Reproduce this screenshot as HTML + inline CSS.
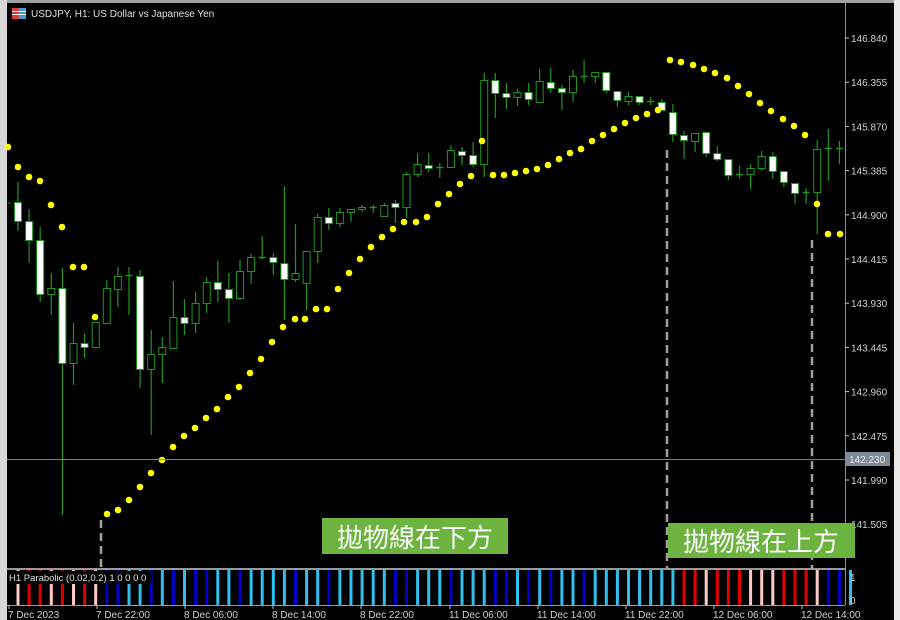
<!DOCTYPE html>
<html><head><meta charset="utf-8">
<style>
html,body{margin:0;padding:0;background:#000;width:900px;height:620px;overflow:hidden}
svg{display:block}
text{font-family:"Liberation Sans",sans-serif}
</style></head><body>
<svg id="s" width="900" height="620" xmlns="http://www.w3.org/2000/svg">
<rect x="0" y="0" width="900" height="620" fill="#000"/>
<rect x="0" y="0" width="900" height="3" fill="#a0a0a0"/>
<rect x="0" y="0" width="7" height="620" fill="#d8d8d8"/>
<rect x="894" y="0" width="6" height="620" fill="#e8e8e8"/>
<g id="g"></g>
<line x1="845.5" y1="3" x2="845.5" y2="605" stroke="#909090" stroke-width="1"/>
<line x1="7" y1="459.5" x2="845" y2="459.5" stroke="#808080" stroke-width="1"/>
<rect x="846" y="452" width="44" height="14" fill="#7d8b99"/>
<text x="849" y="463" font-size="10" fill="#e8e8e8">142.230</text>
<g font-size="10" fill="#d0d0d0" id="ax"></g>
<rect x="12" y="8" width="14" height="11" fill="#d84040"/>
<rect x="19" y="8" width="7" height="11" fill="#4a9ad8"/>
<line x1="12" y1="11.5" x2="26" y2="11.5" stroke="#fff"/>
<line x1="12" y1="14.5" x2="26" y2="14.5" stroke="#fff"/>
<text x="31" y="17" font-size="10" fill="#e0e0e0">USDJPY, H1:  US Dollar vs Japanese Yen</text>
<line x1="7" y1="569" x2="845" y2="569" stroke="#9a9a9a" stroke-width="2"/>
<line x1="7" y1="605.5" x2="845" y2="605.5" stroke="#9a9a9a" stroke-width="1"/>
<g id="h"></g>
<rect x="8" y="571" width="144" height="13" fill="#000"/>
<text x="9" y="581" font-size="9.5" fill="#e0e0e0">H1 Parabolic (0.02,0.2) 1 0 0 0 0</text>
<text x="850" y="581" font-size="10" fill="#d0d0d0">1</text>
<text x="850" y="604" font-size="10" fill="#d0d0d0">0</text>
<g id="t" font-size="10" fill="#d0d0d0"></g>
<line x1="101" y1="520" x2="101" y2="568" stroke="#a0a0a0" stroke-width="2.5" stroke-dasharray="8,5"/>
<line x1="667" y1="150" x2="667" y2="568" stroke="#a0a0a0" stroke-width="2.5" stroke-dasharray="8,5"/>
<line x1="812" y1="240" x2="812" y2="568" stroke="#a0a0a0" stroke-width="2.5" stroke-dasharray="8,5"/>
<rect x="322" y="518" width="186" height="36" fill="#6db33f"/>
<text x="415" y="547" font-size="26" fill="#fff" text-anchor="middle" font-family="'Liberation Sans','Noto Sans CJK TC',sans-serif">拋物線在下方</text>
<rect x="668" y="523" width="187" height="35" fill="#6db33f"/>
<text x="761" y="551" font-size="26" fill="#fff" text-anchor="middle" font-family="'Liberation Sans','Noto Sans CJK TC',sans-serif">拋物線在上方</text>
</svg>
<script>
var NS="http://www.w3.org/2000/svg";
function el(p,n,a,txt){var e=document.createElementNS(NS,n);for(var k in a)e.setAttribute(k,a[k]);if(txt)e.textContent=txt;p.appendChild(e);return e;}
var g=document.getElementById('g');
var C=[[202,221,182,231,1],[221,240,209,263,1],[240,294,227,302,1],[288,294,273,315,0],[288,363,268,515,1],[343,363,323,385,0],[343,347,334,358,1],[322,347,322,348,0],[288,323,280,323,0],[276,289,267,307,0],[275,275,267,315,0],[276,369,270,388,1],[354,369,330,435,0],[347,354,337,383,0],[317,348,281,348,0],[317,323,299,335,1],[303,323,292,333,0],[282,303,277,313,0],[282,289,261,302,1],[289,298,273,323,1],[271,298,260,300,0],[257,271,254,284,0],[257,257,236,259,0],[257,262,253,275,1],[263,279,186,320,1],[273,279,224,282,0],[251,283,251,310,0],[217,251,214,263,0],[217,223,208,230,1],[212,223,208,227,0],[209,212,209,222,0],[207,209,205,212,0],[207,207,205,213,0],[205,216,203,217,0],[203,207,200,223,1],[174,207,172,218,0],[164,174,153,177,0],[165,168,153,172,1],[167,167,163,178,0],[150,167,145,167,0],[151,155,147,165,1],[155,164,142,167,1],[80,164,73,177,0],[80,93,73,118,1],[93,97,83,109,1],[92,97,89,106,0],[92,99,83,105,1],[81,102,69,103,0],[82,88,68,93,1],[88,92,85,110,1],[76,92,70,102,0],[76,76,60,83,0],[72,76,72,83,0],[72,90,72,93,1],[91,100,91,107,1],[96,101,92,105,0],[96,102,96,105,1],[101,101,97,105,0],[102,110,99,111,1],[112,134,104,142,1],[135,140,131,159,1],[133,141,133,152,0],[132,153,132,157,1],[153,159,146,161,1],[159,175,159,180,1],[174,174,166,178,0],[168,174,164,189,0],[156,168,151,171,0],[156,171,152,179,1],[171,182,171,187,1],[183,193,183,204,1],[192,192,188,204,0],[149,192,140,234,0],[148,148,129,181,0],[148,148,141,164,0]];
var GC="#1f951f";
C.forEach(function(c,i){var x=18+i*11.1;
 el(g,'line',{x1:x,y1:c[2],x2:x,y2:c[3],stroke:GC,'stroke-width':1.2});
 if(c[1]-c[0]<1.5){el(g,'line',{x1:x-3.5,y1:c[0]+0.5,x2:x+3.5,y2:c[0]+0.5,stroke:GC,'stroke-width':1.5});}
 else el(g,'rect',{x:x-3.5,y:c[0]+0.5,width:7,height:c[1]-c[0],fill:c[4]?'#fff':'#000',stroke:GC,'stroke-width':1});
});
el(g,'line',{x1:8,y1:203,x2:11,y2:203,stroke:GC});
var D=[[8,147],[18,167],[29,177],[40,181],[51,205],[62,227],[73,267],[84,267],[95,317],[107,514],[118,510],[129,500],[140,487],[151,473],[162,460],[173,447],[184,436],[195,428],[206,418],[217,409],[228,397],[239,387],[250,373],[261,359],[272,342],[283,327],[295,319],[305,319],[316,309],[327,309],[338,289],[349,273],[360,259],[371,247],[382,237],[393,229],[404,222],[416,222],[427,217],[438,204],[449,194],[460,184],[471,176],[482,141],[493,175],[504,175],[515,173],[526,171],[537,169],[548,165],[559,159],[570,153],[581,149],[592,141],[603,135],[614,129],[625,123],[636,118],[647,114],[658,110],[670,60],[681,62],[693,65],[704,69],[715,73],[727,78],[738,86],[749,94],[760,103],[771,111],[783,119],[794,126],[805,135],[817,204],[828,234],[840,234]];
D.forEach(function(d){el(g,'circle',{cx:d[0],cy:d[1],r:3.3,fill:'#ffff00'});});
var ax=document.getElementById('ax');
var L=["146.840","146.355","145.870","145.385","144.900","144.415","143.930","143.445","142.960","142.475","141.990","141.505"];
L.forEach(function(t,i){var y=38+i*44.2;el(ax,'line',{x1:845,y1:y,x2:849,y2:y,stroke:'#c0c0c0'});el(ax,'text',{x:851,y:y+4},t);});
var H="PRRPRPRPBBLLBLBLBBLLBLLLLBLLBLLLLLBBLLLBLLLBBLBLBLLBLLLLLLLLRRPRRRPPPRRRPBBL";
var col={P:'#ffc8c8',R:'#e00000',B:'#0000c8',L:'#30c0f0'};
var h=document.getElementById('h');
for(var i=0;i<H.length;i++){var x=18+i*11.1;el(h,'rect',{x:x-1.5,y:570,width:3,height:35,fill:col[H[i]]});}
var t=document.getElementById('t');
var T=[[8,"7 Dec 2023"],[96,"7 Dec 22:00"],[184,"8 Dec 06:00"],[272,"8 Dec 14:00"],[360,"8 Dec 22:00"],[449,"11 Dec 06:00"],[537,"11 Dec 14:00"],[625,"11 Dec 22:00"],[713,"12 Dec 06:00"],[801,"12 Dec 14:00"]];
T.forEach(function(a){el(t,'line',{x1:a[0]+1,y1:605,x2:a[0]+1,y2:609,stroke:'#c0c0c0'});el(t,'text',{x:a[0],y:618},a[1]);});
</script>
</body></html>
